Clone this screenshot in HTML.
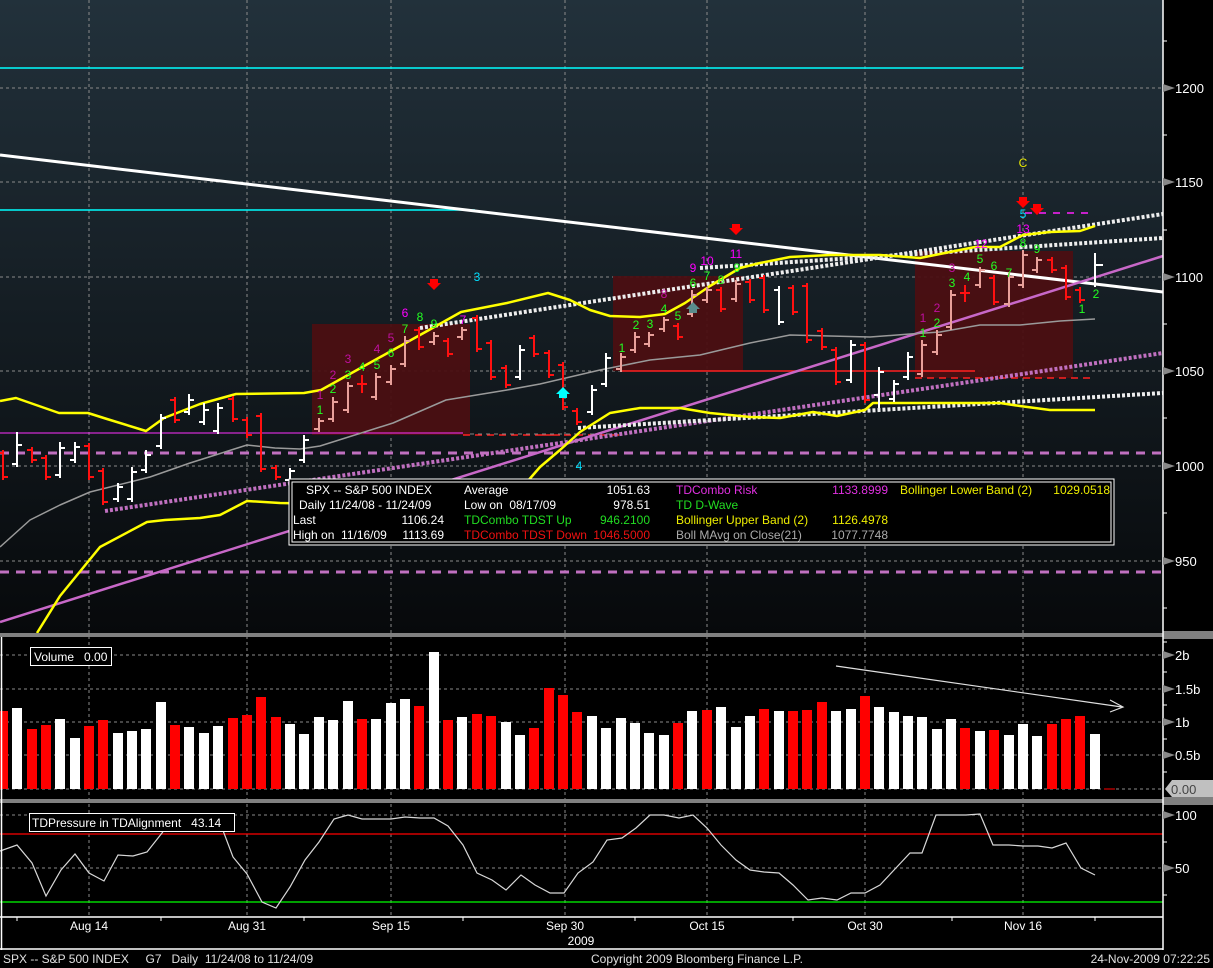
<!DOCTYPE html>
<html><head><meta charset="utf-8"><style>
html,body{margin:0;padding:0;background:#000;width:1213px;height:968px;overflow:hidden}
svg{display:block}
text{font-family:"Liberation Sans",Arial,sans-serif;white-space:pre}
</style></head><body>
<svg width="1213" height="968" viewBox="0 0 1213 968" xmlns="http://www.w3.org/2000/svg" xml:space="preserve">
<defs>
<linearGradient id="bg" x1="0" y1="0" x2="0" y2="1">
<stop offset="0" stop-color="#22313b"/><stop offset="1" stop-color="#07090b"/>
</linearGradient>
</defs>
<rect width="1213" height="968" fill="#000"/>
<rect x="0" y="0" width="1163" height="633" fill="url(#bg)"/>

<g stroke="#8a8a8a" stroke-width="1" stroke-dasharray="3,3" fill="none">
<path d="M0 88H1163M0 182H1163M0 277H1163M0 371H1163M0 466H1163M0 561H1163"/>
<path d="M0 655H1163M0 689H1163M0 722H1163M0 755H1163M0 789H1163"/>
<path d="M0 815H1163M0 868H1163"/>
<path d="M89 0V917M247 0V917M391 0V917M565 0V917M707 0V917M865 0V917M1023 0V917"/>
</g>

<g fill="#4b0f12" opacity="0.95">
<rect x="312" y="324" width="158" height="111"/>
<rect x="613" y="276" width="130" height="95"/>
<rect x="915" y="251" width="158" height="127"/>
</g>

<path d="M0 68H1023M0 210H475" stroke="#00ffff" stroke-width="1.5"/>
<path d="M0 453H1163M0 572H1163" stroke="#c070c0" stroke-width="3" stroke-dasharray="9,7"/>
<path d="M0 433H463" stroke="#ff30ff" stroke-width="1"/>
<path d="M463 435H560M540 435H620M915 378H1092" stroke="#ff2020" stroke-width="1.5" stroke-dasharray="7,5"/>
<path d="M620 371H975" stroke="#ff2020" stroke-width="1.5"/>
<path d="M470 434H620" stroke="#888" stroke-width="1" stroke-dasharray="4,4"/>
<path d="M1025 213H1095" stroke="#ff20ff" stroke-width="1.5" stroke-dasharray="7,7"/>

<path d="M0 155L1163 292" stroke="#ffffff" stroke-width="3"/>
<path d="M0 622L1163 256" stroke="#c868c8" stroke-width="2.5"/>
<path d="M105 511L1163 353" stroke="#c070c0" stroke-width="4" stroke-dasharray="3,2"/>
<g stroke="#eeeeee" stroke-width="4" stroke-dasharray="3,2">
<path d="M420 328L1163 214"/>
<path d="M700 268L1163 238"/>
<path d="M578 428L1163 393"/>
</g>

<g fill="none" stroke-linejoin="round">
<path d="M0 401L16 398L59 413L88 413L107 419L146 431L164 418L200 404L236 394L304 393L321 390L357 370L393 350L429 330L461 312L507 303L548 293L570 300L590 310L610 316L640 317L665 314L685 303L710 286L740 268L760 263L790 257L830 255L880 255L920 258L950 252L975 247L1000 247L1023 235L1050 232L1080 231L1095 226" stroke="#ffff00" stroke-width="2.5"/>
<path d="M37 633L60 596L100 547L147 522L165 520L200 518L220 515L247 501L280 503L330 504L380 504L430 499L470 494L500 497L520 490L540 467L560 450L580 432L610 413L640 408L680 408L710 413L750 417L780 418L813 412L837 416L865 410L873 403L960 403L1000 403L1020 406L1050 410L1095 410" stroke="#ffff00" stroke-width="2.5"/>
<path d="M0 547L30 520L60 505L90 492L150 477L190 463L247 445L275 448L300 449L320 446L393 423L446 400L507 390L540 384L600 370L650 360L700 355L750 343L790 335L830 336L870 337L910 334L940 332L980 325L1020 325L1060 321L1095 319" stroke="#9a9a9a" stroke-width="1.5"/>
</g>

<g fill="none" stroke-width="2" shape-rendering="crispEdges">
<path stroke="#ff1010" d="M3 450V480M-2 453H3M3 477H8M32 447V463M27 450H32M32 460H37M46 455V480M41 458H46M46 477H51M89 443V480M84 446H89M89 477H94M103 468V505M98 471H103M103 502H108M175 397V423M170 400H175M175 420H180M233 396V422M228 399H233M233 419H238M247 417V438M242 420H247M247 435H252M261 413V472M256 416H261M261 469H266M276 465V480M271 468H276M276 477H281M362 375V393M357 384H367M419 327V350M414 330H419M419 347H424M448 338V357M443 341H448M448 354H453M477 315V352M472 318H477M477 349H482M491 340V380M486 343H491M491 377H496M506 365V388M501 368H506M506 385H511M534 335V357M529 338H534M534 354H539M549 350V378M544 353H549M549 375H554M563 362V410M558 365H563M563 407H568M577 408V425M572 411H577M577 422H582M678 323V340M673 326H678M678 337H683M721 287V312M716 290H721M721 309H726M750 279V303M745 282H750M750 300H755M764 275V313M759 278H764M764 310H769M793 285V315M788 288H793M793 312H798M807 283V343M802 286H807M807 340H812M822 328V350M817 331H822M822 347H827M836 347V385M831 350H836M836 382H841M865 342V403M860 345H865M865 400H870M965 285V302M960 293H970M994 275V305M989 278H994M994 302H999M1052 257V273M1047 260H1052M1052 270H1057M1066 265V300M1061 268H1066M1066 297H1071M1080 287V303M1075 290H1080M1080 300H1085"/>
<path stroke="#ffffff" d="M17 432V467M12 464H17M17 445H22M60 442V478M55 475H60M60 448H65M75 442V463M70 460H75M75 447H80M118 483V502M113 499H118M118 487H123M132 467V502M127 499H132M132 472H137M146 450V473M141 470H146M146 455H151M161 414V449M156 446H161M161 418H166M189 394V415M184 412H189M189 400H194M204 403V425M199 422H204M204 410H209M218 403V434M213 431H218M218 408H223M290 468V483M285 480H290M290 471H295M304 435V463M299 460H304M304 440H309M520 345V380M515 377H520M520 350H525M592 385V415M587 412H592M592 390H597M606 353V387M601 384H606M606 358H611M779 286V325M774 290H779M779 322H784M851 340V383M846 380H851M851 345H856M879 367V408M874 395H879M879 372H884M894 380V402M889 399H894M894 384H899M908 352V380M903 377H908M908 357H913M1095 253V287M1090 284H1095M1095 265H1103"/>
<path stroke="#e8a09a" d="M319 418V432M314 429H319M319 421H324M333 397V422M328 419H333M333 402H338M348 382V413M343 410H348M348 386H353M376 373V400M371 397H376M376 377H381M391 365V385M386 382H391M391 369H396M405 336V367M400 364H405M405 341H410M434 332V345M429 342H434M434 336H439M462 327V340M457 337H462M462 330H467M621 353V372M616 369H621M621 357H626M635 332V353M630 350H635M635 337H640M649 332V347M644 344H649M649 335H654M664 317V332M659 329H664M664 320H669M692 290V317M687 314H692M692 295H697M707 287V303M702 300H707M707 290H712M736 280V302M731 299H736M736 284H741M922 340V377M917 374H922M922 345H927M937 330V355M932 352H937M937 335H942M951 290V330M946 327H951M951 295H956M980 267V288M975 285H980M980 270H985M1009 272V307M1004 304H1009M1009 277H1014M1023 250V288M1018 285H1023M1023 255H1028M1037 257V273M1032 270H1037M1037 260H1042"/>
</g>

<g fill="#ff0000">
<path d="M430 279h8v4h3l-7 7-7-7h3z"/>
<path d="M732 224h8v4h3l-7 7-7-7h3z"/>
<path d="M1019 197h8v4h3l-7 7-7-7h3z"/>
<path d="M1033 204h8v4h3l-7 7-7-7h3z"/>
</g>
<path d="M559 398h8v-4h3l-7-7-7 7h3z" fill="#00ffff"/>
<path d="M689 313h8v-4h3l-7-7-7 7h3z" fill="#5a8c8c"/>

<g font-size="12" text-anchor="middle">
<g fill="#22ff22">
<text x="320" y="414">1</text><text x="333" y="393">2</text><text x="348" y="379">3</text><text x="362" y="371">4</text><text x="377" y="369">5</text><text x="391" y="357">6</text><text x="405" y="333">7</text><text x="420" y="321">8</text><text x="434" y="328">9</text>
<text x="622" y="352">1</text><text x="636" y="329">2</text><text x="650" y="328">3</text><text x="664" y="313">4</text><text x="678" y="320">5</text><text x="693" y="287">6</text><text x="707" y="280">7</text><text x="721" y="284">8</text><text x="737" y="272">9</text>
<text x="923" y="337">1</text><text x="937" y="327">2</text><text x="952" y="287">3</text><text x="967" y="281">4</text><text x="980" y="263">5</text><text x="994" y="270">6</text><text x="1009" y="277">7</text><text x="1023" y="247">8</text><text x="1037" y="253">9</text><text x="1082" y="313">1</text><text x="1096" y="298">2</text>
</g>
<g fill="#c010a0">
<text x="320" y="399">1</text><text x="333" y="379">2</text><text x="348" y="363">3</text><text x="377" y="353">4</text><text x="391" y="342">5</text><text x="664" y="298">8</text>
<text x="923" y="322">1</text><text x="937" y="312">2</text><text x="952" y="272">3</text>
</g>
<g fill="#ff00ff">
<text x="405" y="317">6</text><text x="463" y="324">7</text><text x="693" y="272">9</text><text x="707" y="265">10</text><text x="736" y="258">11</text><text x="981" y="248">12</text><text x="1023" y="233">13</text>
</g>
<g fill="#00e0ff"><text x="477" y="281">3</text><text x="579" y="470">4</text><text x="1023" y="218">5</text></g>
<text x="1023" y="167" fill="#e8e800">C</text>
</g>

<rect x="289" y="479" width="825" height="66" fill="#000" stroke="#fff" stroke-width="1"/>
<rect x="292" y="482" width="819" height="60" fill="none" stroke="#fff" stroke-width="1"/>
<g font-size="12" fill="#fff">
<text x="306" y="494">SPX -- S&amp;P 500 INDEX</text>
<text x="299" y="509">Daily 11/24/08 - 11/24/09</text>
<text x="293" y="524">Last</text><text x="444" y="524" text-anchor="end">1106.24</text>
<text x="293" y="539">High on  11/16/09</text><text x="444" y="539" text-anchor="end">1113.69</text>
<text x="464" y="494">Average</text><text x="650" y="494" text-anchor="end">1051.63</text>
<text x="464" y="509">Low on  08/17/09</text><text x="650" y="509" text-anchor="end">978.51</text>
<text x="464" y="524" fill="#22dd22">TDCombo TDST Up</text><text x="650" y="524" text-anchor="end" fill="#22dd22">946.2100</text>
<text x="464" y="539" fill="#ee1111">TDCombo TDST Down</text><text x="650" y="539" text-anchor="end" fill="#ee1111">1046.5000</text>
<text x="676" y="494" fill="#e030e0">TDCombo Risk</text><text x="888" y="494" text-anchor="end" fill="#e030e0">1133.8999</text>
<text x="676" y="509" fill="#22dd22">TD D-Wave</text>
<text x="676" y="524" fill="#eeee00">Bollinger Upper Band (2)</text><text x="888" y="524" text-anchor="end" fill="#eeee00">1126.4978</text>
<text x="676" y="539" fill="#aaaaaa">Boll MAvg on Close(21)</text><text x="888" y="539" text-anchor="end" fill="#aaaaaa">1077.7748</text>
<text x="900" y="494" fill="#eeee00">Bollinger Lower Band (2)</text><text x="1110" y="494" text-anchor="end" fill="#eeee00">1029.0518</text>
</g>

<rect x="0" y="633" width="1213" height="4" fill="#808080"/>
<rect x="0" y="799" width="1213" height="4" fill="#808080"/>

<g shape-rendering="crispEdges">
<g fill="#ff0000">
<rect x="-2" y="711" width="10" height="78"/><rect x="27" y="729" width="10" height="60"/><rect x="41" y="725" width="10" height="64"/><rect x="84" y="726" width="10" height="63"/><rect x="98" y="720" width="10" height="69"/><rect x="170" y="725" width="10" height="64"/><rect x="228" y="718" width="10" height="71"/><rect x="242" y="715" width="10" height="74"/><rect x="256" y="697" width="10" height="92"/><rect x="271" y="717" width="10" height="72"/><rect x="357" y="719" width="10" height="70"/><rect x="414" y="706" width="10" height="83"/><rect x="443" y="720" width="10" height="69"/><rect x="472" y="714" width="10" height="75"/><rect x="486" y="716" width="10" height="73"/><rect x="529" y="728" width="10" height="61"/><rect x="544" y="688" width="10" height="101"/><rect x="558" y="695" width="10" height="94"/><rect x="572" y="712" width="10" height="77"/><rect x="673" y="723" width="10" height="66"/><rect x="702" y="710" width="10" height="79"/><rect x="759" y="709" width="10" height="80"/><rect x="788" y="711" width="10" height="78"/><rect x="802" y="710" width="10" height="79"/><rect x="817" y="702" width="10" height="87"/><rect x="860" y="696" width="10" height="93"/><rect x="960" y="728" width="10" height="61"/><rect x="989" y="730" width="10" height="59"/><rect x="1047" y="724" width="10" height="65"/><rect x="1061" y="719" width="10" height="70"/><rect x="1075" y="716" width="10" height="73"/>
</g>
<g fill="#ffffff">
<rect x="12" y="708" width="10" height="81"/><rect x="55" y="719" width="10" height="70"/><rect x="70" y="738" width="10" height="51"/><rect x="113" y="733" width="10" height="56"/><rect x="127" y="731" width="10" height="58"/><rect x="141" y="729" width="10" height="60"/><rect x="156" y="702" width="10" height="87"/><rect x="184" y="727" width="10" height="62"/><rect x="199" y="733" width="10" height="56"/><rect x="213" y="726" width="10" height="63"/><rect x="285" y="724" width="10" height="65"/><rect x="299" y="734" width="10" height="55"/><rect x="314" y="717" width="10" height="72"/><rect x="328" y="720" width="10" height="69"/><rect x="343" y="701" width="10" height="88"/><rect x="371" y="719" width="10" height="70"/><rect x="386" y="703" width="10" height="86"/><rect x="400" y="699" width="10" height="90"/><rect x="429" y="652" width="10" height="137"/><rect x="457" y="717" width="10" height="72"/><rect x="501" y="722" width="10" height="67"/><rect x="515" y="735" width="10" height="54"/><rect x="587" y="716" width="10" height="73"/><rect x="601" y="728" width="10" height="61"/><rect x="616" y="718" width="10" height="71"/><rect x="630" y="723" width="10" height="66"/><rect x="644" y="733" width="10" height="56"/><rect x="659" y="735" width="10" height="54"/><rect x="687" y="711" width="10" height="78"/><rect x="716" y="707" width="10" height="82"/><rect x="731" y="727" width="10" height="62"/><rect x="745" y="716" width="10" height="73"/><rect x="774" y="711" width="10" height="78"/><rect x="831" y="711" width="10" height="78"/><rect x="846" y="709" width="10" height="80"/><rect x="874" y="707" width="10" height="82"/><rect x="889" y="712" width="10" height="77"/><rect x="903" y="716" width="10" height="73"/><rect x="917" y="717" width="10" height="72"/><rect x="932" y="729" width="10" height="60"/><rect x="946" y="719" width="10" height="70"/><rect x="975" y="731" width="10" height="58"/><rect x="1004" y="735" width="10" height="54"/><rect x="1018" y="724" width="10" height="65"/><rect x="1032" y="736" width="10" height="53"/><rect x="1090" y="734" width="10" height="55"/>
</g>
<path d="M1104 789H1115" stroke="#ff0000"/>
</g>
<path d="M836 666L1122 707M1110 700L1123 707L1110 712" stroke="#e0e0e0" stroke-width="1.2" fill="none"/>
<rect x="30.5" y="647.5" width="81" height="18" fill="#000" stroke="#fff"/>
<text x="34" y="661" font-size="12" fill="#fff">Volume   0.00</text>

<path d="M0 834H1163" stroke="#ff0000" stroke-width="1.2"/>
<path d="M0 902H1163" stroke="#00ff00" stroke-width="1.2"/>
<path d="M0 851L17 845L32 863L46 896L61 870L75 854L89 873L104 881L118 855L133 856L147 852L162 833L175 814L190 814L204 814L219 820L233 857L247 874L262 902L276 908L290 887L305 860L319 842L334 819L348 815L362 819L377 819L391 819L405 817L420 818L434 818L448 826L463 845L477 873L492 880L506 890L521 875L535 885L550 893L564 893L578 873L593 862L607 840L622 838L636 828L650 815L664 815L679 818L693 815L707 828L721 845L736 860L750 870L764 872L779 873L793 885L808 900L822 898L837 900L851 893L865 893L880 885L895 869L910 853L922 853L936 815L950 815L966 815L980 814L993 845L1009 845L1023 846L1038 846L1052 848L1066 843L1081 868L1095 875" stroke="#d8d8d8" stroke-width="1.2" fill="none"/>
<rect x="29.5" y="813.5" width="205" height="18" fill="#000" stroke="#fff"/>
<text x="32" y="827" font-size="12" fill="#fff">TDPressure in TDAlignment   43.14</text>

<path d="M1163 0V950M0 917H1163M0 949H1163M1.5 637V950" stroke="#fff" stroke-width="1.5" fill="none"/>
<path d="M1163 632H1213M1163 638H1213M1163 798H1213M1163 804H1213" stroke="#fff" stroke-width="1"/>
<path d="M17 917v4M161 917v4M304 917v4M463 917v4M635 917v4M793 917v4M952 917v4M1095 917v4M1163 41h4M1163 135h4M1163 230h4M1163 324h4M1163 418h4M1163 513h4M1163 608h4M1163 642h4M1163 672h4M1163 705h4M1163 739h4M1163 772h4M1163 842h4M1163 895h4" stroke="#fff" stroke-width="1"/>
<g fill="#888">
<path d="M1163 84l12 4-12 4z"/><path d="M1163 178l12 4-12 4z"/><path d="M1163 273l12 4-12 4z"/><path d="M1163 367l12 4-12 4z"/><path d="M1163 462l12 4-12 4z"/><path d="M1163 557l12 4-12 4z"/>
<path d="M1163 651l12 4-12 4z"/><path d="M1163 685l12 4-12 4z"/><path d="M1163 718l12 4-12 4z"/><path d="M1163 751l12 4-12 4z"/>
<path d="M1163 811l12 4-12 4z"/><path d="M1163 864l12 4-12 4z"/>
</g>
<path d="M1165 789l7-9H1213V797H1172z" fill="#c0c0c0"/>
<g font-size="13" fill="#fff">
<text x="1175" y="93">1200</text><text x="1175" y="187">1150</text><text x="1175" y="282">1100</text><text x="1175" y="376">1050</text><text x="1175" y="471">1000</text><text x="1175" y="566">950</text>
<text x="1175" y="660">2b</text><text x="1175" y="694">1.5b</text><text x="1175" y="727">1b</text><text x="1175" y="760">0.5b</text>
<text x="1171" y="794" fill="#444">0.00</text>
<text x="1175" y="820">100</text><text x="1175" y="873">50</text>
</g>
<g font-size="12" fill="#fff" text-anchor="middle">
<text x="89" y="930">Aug 14</text><text x="247" y="930">Aug 31</text><text x="391" y="930">Sep 15</text><text x="565" y="930">Sep 30</text><text x="707" y="930">Oct 15</text><text x="865" y="930">Oct 30</text><text x="1023" y="930">Nov 16</text>
<text x="581" y="945">2009</text>
</g>
<g font-size="12" fill="#e0e0e0">
<text x="3" y="963">SPX -- S&amp;P 500 INDEX     G7   Daily  11/24/08 to 11/24/09</text>
<text x="591" y="963">Copyright 2009 Bloomberg Finance L.P.</text>
<text x="1210" y="963" text-anchor="end">24-Nov-2009 07:22:25</text>
</g>
</svg>
</body></html>
